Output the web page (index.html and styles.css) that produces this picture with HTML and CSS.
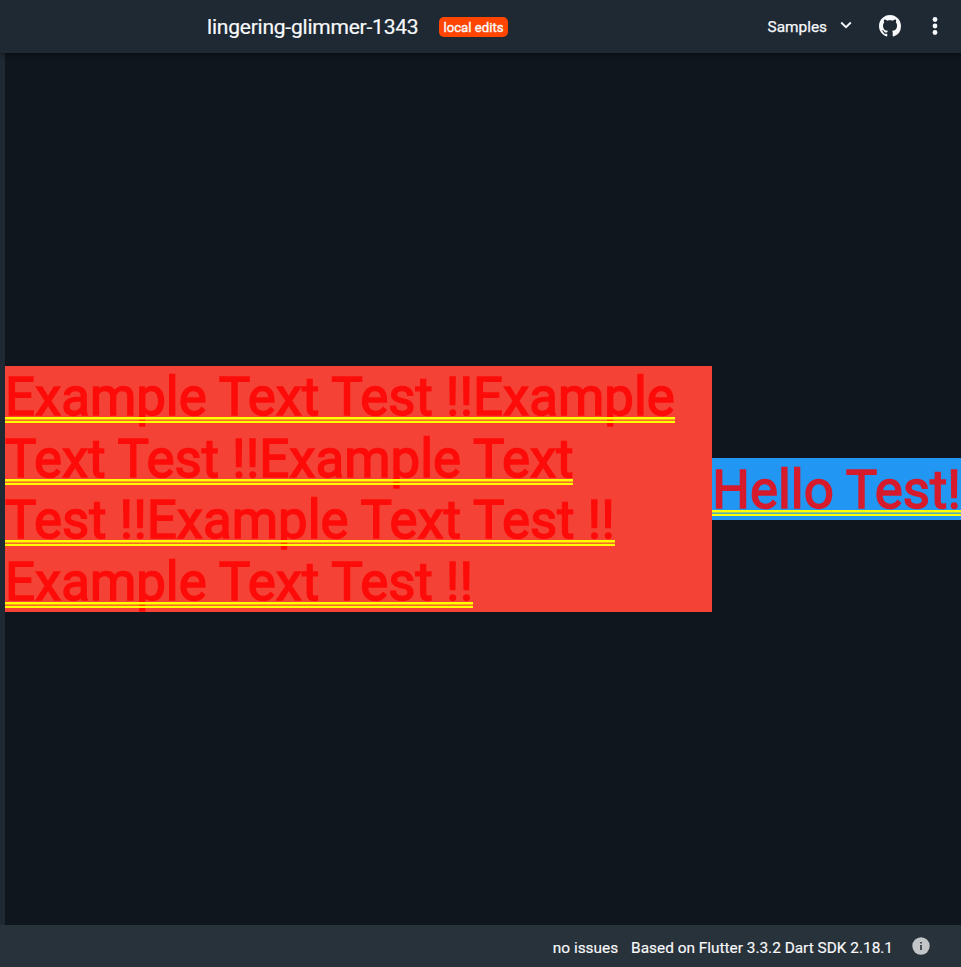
FILE: index.html
```
<!DOCTYPE html>
<html lang="en">
<head>
<meta charset="utf-8">
<title>lingering-glimmer-1343</title>
<link rel="stylesheet" href="styles.css">
</head>
<body>
<header class="header">
  <h1 class="title">lingering-glimmer-1343</h1>
  <span class="badge">local edits</span>
  <nav class="actions">
    <span class="samples">Samples</span>
    <svg class="chevron" viewBox="0 0 12 8"><path d="M1.200 1.500 6 6.200l4.800-4.700" fill="none" stroke="currentColor" stroke-width="1.900"/></svg>
    <svg class="github" viewBox="0 0 16 16"><path fill="currentColor" d="M8 0C3.580 0 0 3.580 0 8c0 3.540 2.290 6.530 5.470 7.590.4.070.55-.17.55-.38 0-.19-.01-.82-.01-1.490-2.010.37-2.530-.49-2.690-.94-.09-.23-.48-.94-.82-1.130-.28-.15-.68-.52-.01-.53.63-.01 1.080.58 1.230.82.72 1.210 1.870.87 2.330.66.070-.52.28-.87.51-1.070-1.780-.2-3.640-.89-3.640-3.950 0-.87.31-1.590.82-2.150-.08-.2-.36-1.020.08-2.120 0 0 .67-.21 2.200.82.64-.18 1.320-.27 2-.27s1.360.09 2 .27c1.530-1.040 2.200-.82 2.200-.82.44 1.100.16 1.920.08 2.120.51.56.82 1.270.82 2.150 0 3.070-1.870 3.750-3.650 3.950.29.25.54.73.54 1.480 0 1.070-.01 1.930-.01 2.200 0 .21.15.46.55.38A8.010 8.010 0 0 0 16 8c0-4.420-3.580-8-8-8z"/></svg>
    <svg class="more" viewBox="0 0 6 18"><g fill="currentColor"><circle cx="3" cy="2.500" r="2.400"/><circle cx="3" cy="9" r="2.400"/><circle cx="3" cy="15.500" r="2.400"/></g></svg>
  </nav>
</header>
<main class="output">
  <div class="box red">
    <span class="line">Example Text Test !!Example</span>
    <span class="line">Text Test !!Example Text</span>
    <span class="line">Test !!Example Text Test !!</span>
    <span class="line">Example Text Test !!</span>
  </div>
  <div class="box blue"><span class="line">Hello Test!</span></div>
</main>
<footer class="footer">
  <span class="issues">no issues</span>
  <span class="version">Based on Flutter 3.3.2 Dart SDK 2.18.1</span>
  <svg class="info" viewBox="0 0 18 18"><circle cx="9" cy="9" r="8.700" fill="#c3c6c8"/><path d="M8.200 5h1.600v1.600H8.200zM8.200 8h1.600v5H8.200z" fill="#28323a"/></svg>
</footer>
</body>
</html>
```
FILE: styles.css
```
*, *::after { box-sizing: border-box; }

body {
  margin: 0;
  height: 967px;
  display: flex;
  flex-direction: column;
  overflow: hidden;
  background: #0f161e;
  color: #f8f9fa;
  font-family: Roboto, "Liberation Sans", sans-serif;
}

.header {
  position: relative;
  z-index: 1;
  flex: 0 0 53px;
  display: flex;
  align-items: center;
  padding: 0 23.500px 0 207px;
  background: #1e2934;
  box-shadow: 0 2px 5px rgba(0, 0, 0, 0.4);
}

.title {
  width: 211px;
  margin: 0;
  font-size: 21px;
  font-weight: 400;
  letter-spacing: -0.220px;
  line-height: 28px;
  white-space: nowrap;
  -webkit-text-stroke: 0.200px currentColor;
}

.badge {
  width: 69px;
  height: 20px;
  margin-left: 21px;
  border-radius: 5px;
  background: #ff4500;
  font-size: 13.200px;
  line-height: 21px;
  text-align: center;
  white-space: nowrap;
  -webkit-text-stroke: 0.400px currentColor;
}

.actions {
  display: flex;
  align-items: center;
  margin-left: auto;
}

.samples {
  font-size: 15.400px;
  line-height: 20px;
  -webkit-text-stroke: 0.250px currentColor;
}

.chevron { width: 12px; height: 8px; margin: -4px 27px 0 13px; }
.github { width: 22px; height: 22px; margin: -1px 30.500px 0 0; }
.more { width: 6px; height: 18px; margin-top: -1px; }

.output {
  flex: 1;
  display: flex;
  align-items: center;
  border-left: 5px solid #1e2934;
}

.box {
  flex: none;
  font-size: 52.800px;
  line-height: 59.300px;
}

.red { width: 707.300px; background: #f44336; color: #fd0c0a; }
.blue { flex: 1; background: #2196f3; color: #d61b2d; }

.line {
  position: relative;
  display: block;
  width: fit-content;
  padding-top: 2.300px;
  white-space: nowrap;
  -webkit-text-stroke: 1.500px currentColor;
}

/* Double underline across the full width of each text run. */
.line::after {
  content: "";
  position: absolute;
  left: 0;
  right: 0;
  top: 51.300px;
  height: 6px;
  border: solid #ff0;
  border-width: 2px 0;
  background: linear-gradient(rgba(255, 255, 0, 0.550) 50%, rgba(255, 255, 0, 0.200) 50%);
}

.footer {
  flex: 0 0 42px;
  display: flex;
  align-items: center;
  justify-content: flex-end;
  padding: 4px 31.500px 0 0;
  background: #28323a;
  font-size: 15.400px;
  line-height: 20px;
  -webkit-text-stroke: 0.150px currentColor;
}

.version { margin-left: 13px; }
.info { width: 18px; height: 18px; margin: -4px 0 0 18.500px; }
```
